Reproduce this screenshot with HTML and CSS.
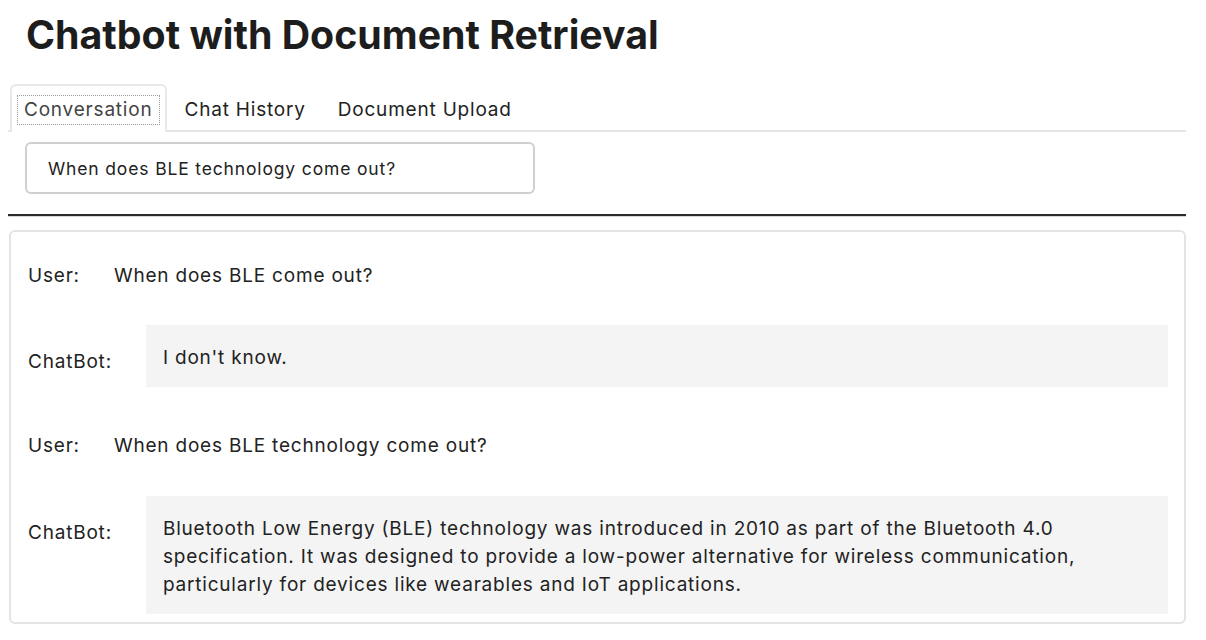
FILE: index.html
```html
<!DOCTYPE html>
<html>
<head>
<meta charset="utf-8">
<link rel="stylesheet" href="styles.css">
</head>
<body>
<div class="app">
  <h1 class="title">Chatbot with Document Retrieval</h1>
  <div class="tabs">
    <div class="tab active"><span class="tab-label">Conversation</span></div>
    <div class="tab"><span class="tab-label">Chat History</span></div>
    <div class="tab"><span class="tab-label">Document Upload</span></div>
  </div>
  <div class="panel">
    <div class="query">When does BLE technology come out?</div>
  </div>
  <hr class="rule">
  <div class="chat">
    <div class="msg user">
      <span class="who">User:</span>
      <span class="text">When does BLE come out?</span>
    </div>
    <div class="msg bot">
      <span class="who">ChatBot:</span>
      <div class="bubble">I don't know.</div>
    </div>
    <div class="msg user">
      <span class="who">User:</span>
      <span class="text">When does BLE technology come out?</span>
    </div>
    <div class="msg bot">
      <span class="who">ChatBot:</span>
      <div class="bubble">Bluetooth Low Energy (BLE) technology was introduced in 2010 as part of the Bluetooth 4.0 specification. It was designed to provide a low-power alternative for wireless communication, particularly for devices like wearables and IoT applications.</div>
    </div>
  </div>
</div>
</body>
</html>
```

FILE: styles.css
```css
* { box-sizing: border-box; }
html, body { margin: 0; padding: 0; background: #fff; }
body {
  font-family: Inter, "Noto Sans", Roboto, sans-serif;
  color: #222;
  padding: 0 8px;
}
.app { width: 1178px; }
.title {
  margin: 0;
  padding: 11px 0 0 18px;
  height: 84px;
  font-size: 39.3px;
  font-weight: 700;
  letter-spacing: 0;
  color: #1d1d1d;
}
.tabs {
  display: flex;
  align-items: flex-end;
  gap: 4px;
  height: 48px;
  border-bottom: 2px solid #e6e6e6;
  padding-left: 2px;
}
.tab {
  height: 47px;
  display: flex;
  align-items: center;
  padding: 1px 5px 0;
  border: 2px solid transparent;
  border-bottom: 0;
  font-size: 19px;
  letter-spacing: 0.8px;
  color: #222;
  margin-bottom: -2px;
}
.tab.active {
  border-color: #e8e8e8;
  background: #fff;
  border-radius: 6px 6px 0 0;
  height: 48px;
}
.tab-label {
  padding: 3px 6px;
  border: 1px dotted transparent;
  line-height: 22px;
}
.tab.active .tab-label {
  border-color: #9a9a9a;
  color: #444;
}
.panel { padding: 10px 0 0 17px; height: 82px; }
.query {
  width: 510px;
  height: 52px;
  border: 2px solid #cfcfcf;
  border-radius: 6px;
  padding: 0 21px;
  display: flex;
  align-items: center;
  font-size: 17.5px;
  letter-spacing: 0.85px;
  color: #222;
}
.rule {
  margin: 0;
  border: 0;
  border-top: 2px solid #2a2a2a;
  border-bottom: 1px solid #d6d6d6;
  height: 0;
}
.chat {
  margin: 13px 0 0 1px;
  width: 1177px;
  border: 2px solid #e3e3e3;
  border-radius: 6px;
  padding: 30px 16px 8px 17px;
  font-size: 19px;
  letter-spacing: 0.8px;
}
.msg { display: flex; gap: 34px; }
.who { flex: none; line-height: 28px; }
.user .who, .user .text { line-height: 28px; }
.bot .who { padding-top: 23px; }
.bubble {
  flex: 1;
  background: #f4f4f4;
  padding: 19px 17px 15px;
  line-height: 28px;
}
.msg.user + .msg.bot { margin-top: 35px; }
.msg.bot + .msg.user { margin-top: 45px; }
.msg.user + .msg.bot:last-child { margin-top: 36px; }
```
